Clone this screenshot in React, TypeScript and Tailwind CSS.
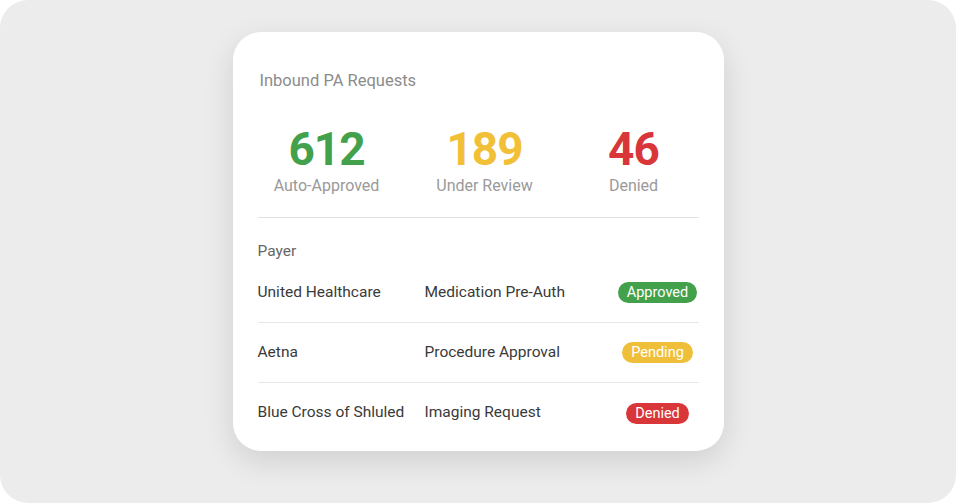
import React from 'react';

const stats = [
  { value: '612', label: 'Auto-Approved', color: 'text-[#43a04b]', w: 'w-[138px]' },
  { value: '189', label: 'Under Review', color: 'text-[#f2c037]', w: 'w-[178px]' },
  { value: '46', label: 'Denied', color: 'text-[#d9363a]', w: 'w-[120px]' },
];

const rows = [
  { payer: 'United Healthcare', type: 'Medication Pre-Auth', status: 'Approved', badge: 'bg-[#43a04b]' },
  { payer: 'Aetna', type: 'Procedure Approval', status: 'Pending', badge: 'bg-[#f0bf3a]' },
  { payer: 'Blue Cross of Shluled', type: 'Imaging Request', status: 'Denied', badge: 'bg-[#d9363a]' },
];

export default function App() {
  return (
    <div className="w-[956px] h-[503px] bg-white" style={{ fontFamily: 'Roboto, "Noto Sans", sans-serif' }}>
      <div className="w-full h-full rounded-[28px] bg-[#ececec] flex justify-center pt-[32px]">
        <div className="w-[491px] h-[419px] bg-white rounded-[28px] shadow-[0_10px_30px_rgba(0,0,0,0.12)] px-[25px] pt-[40px]">
          <div className="text-[16.5px] leading-[17px] text-[#8c8c8c] pl-[2px]">Inbound PA Requests</div>
          <div className="flex mt-[36px]">
            {stats.map((s) => (
              <div key={s.label} className={`${s.w} flex flex-col items-center`}>
                <div className={`text-[46px] leading-[48px] font-bold tracking-[-1px] ${s.color}`}>{s.value}</div>
                <div className="text-[16px] leading-[18px] mt-[4px] text-[#9a9a9a]">{s.label}</div>
              </div>
            ))}
          </div>
          <div className="h-px bg-[#e3e3e3] mt-[22px]" />
          <div className="text-[15.5px] leading-[18px] text-[#666] mt-[24px]">Payer</div>
          <div className="mt-[3px]">
            {rows.map((r, i) => (
              <div
                key={r.payer}
                className={`flex items-center h-[60px] ${i < rows.length - 1 ? 'border-b border-[#e6e6e6]' : ''}`}
              >
                <div className="w-[167px] text-[15.5px] text-[#3a3a3a]">{r.payer}</div>
                <div className="flex-1 text-[15.5px] text-[#3a3a3a]">{r.type}</div>
                <div className="w-[90px] flex justify-center pl-[8px]">
                  <span className={`${r.badge} text-white text-[14.5px] leading-[21px] h-[21px] px-[9px] rounded-full`}>
                    {r.status}
                  </span>
                </div>
              </div>
            ))}
          </div>
        </div>
      </div>
    </div>
  );
}
